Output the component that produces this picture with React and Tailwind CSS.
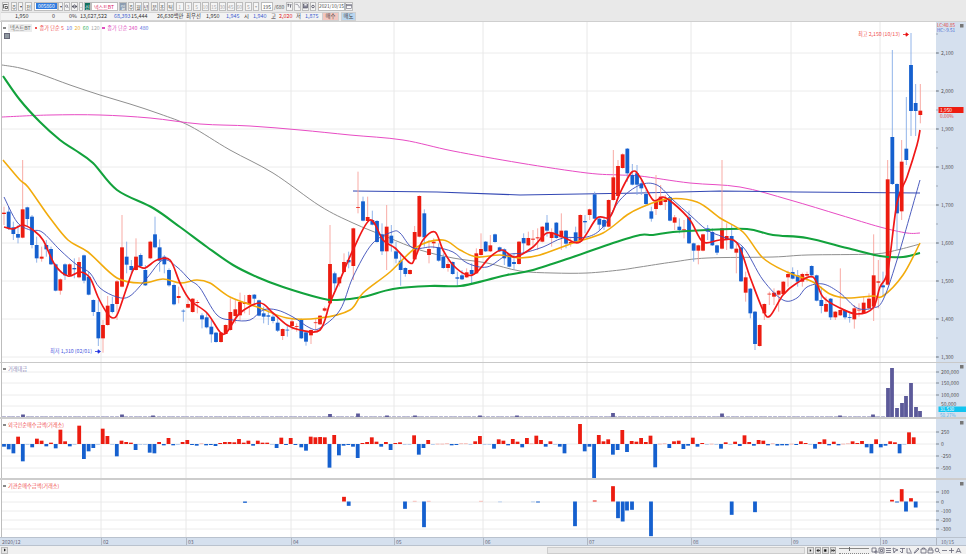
import React from "react";

const F = '"Noto Sans CJK KR","Liberation Sans",sans-serif';
const RED = "#ec1c10", BLUE = "#1560cf";

// [x, colour, top, bottom, wickTop, wickBottom], in crop units (3 units = 1 px)
const S1 = [[12,"r",188,192,170,225],[26,"b",185,235,170,240],[40,"b",232,252,215,270],[54,"b",252,263,225,280],[68,"r",178,263,30,265],[82,"b",172,207,170,230],[96,"b",200,285,195,295],[110,"b",285,325,260,338],[125,"r",320,326,290,335],[139,"b",285,298,270,320],[153,"b",297,343,290,345],[167,"b",343,422,340,424],[181,"r",388,422,385,434],[195,"b",343,376,340,390],[209,"r",343,376,340,378],[223,"b",354,358,325,385],[237,"r",336,382,322,385],[252,"b",316,392,314,400],[266,"b",380,434,365,436],[280,"b",450,486,448,498],[295,"b",486,565,450,588],[309,"r",525,565,510,608],[323,"r",467,525,438,527],[337,"b",462,486,440,490],[351,"r",394,462,390,510],[366,"r",292,410,195,412],[380,"b",320,344,275,370],[394,"b",348,360,330,372],[408,"r",320,360,265,362],[422,"b",315,348,310,352],[436,"b",360,406,345,408],[451,"r",275,325,272,328],[465,"b",253,292,200,295],[479,"b",292,332,268,365],[493,"b",320,343,315,370],[507,"b",360,406,355,410],[522,"b",405,463,400,466],[536,"r",438,444,410,460],[550,"b",482,484,478,515],[564,"r",462,473,445,475],[578,"r",446,486,444,488],[592,"r",456,459,450,490],[606,"b",496,508,490,535],[620,"b",502,532,488,535],[634,"b",530,553,510,578],[648,"b",548,576,546,578],[663,"r",548,576,546,578],[677,"r",525,552,523,554],[691,"r",486,540,445,542],[706,"r",478,498,450,520],[720,"r",456,496,428,510],[734,"r",456,462,435,490],[748,"r",435,463,433,495],[763,"b",434,446,432,460],[777,"b",451,497,449,499],[791,"b",490,500,470,520],[805,"b",496,500,475,525],[819,"b",500,513,490,520],[833,"b",518,542,500,546],[848,"r",537,558,535,570],[862,"b",539,541,525,560],[876,"r",514,528,505,540],[890,"r",528,530,520,545],[904,"b",508,565,506,567],[918,"b",547,575,545,587],[933,"r",540,556,538,582],[947,"r",517,519,505,540],[960,"r",497,523,495,525]];
const S2 = [[14,"r",505,512,500,515],[30,"r",372,490,255,492],[44,"b",400,430,395,450],[58,"r",412,430,410,440],[72,"r",366,396,340,398],[86,"b",360,367,335,385],[100,"r",265,378,263,420],[114,"r",201,203,95,220],[129,"b",184,242,170,244],[143,"r",231,243,170,245],[157,"b",240,254,212,256],[171,"b",243,306,240,308],[186,"b",283,334,250,345],[200,"r",260,334,195,390],[214,"b",287,310,255,335],[228,"b",334,356,305,370],[242,"b",362,390,340,437],[256,"b",384,402,382,410],[270,"r",390,402,388,404],[284,"r",276,358,258,360],[298,"r",168,290,166,292],[313,"b",220,292,208,320],[327,"r",327,345,300,370],[341,"r",305,310,295,325],[356,"b",322,362,310,365],[370,"b",350,384,340,386],[384,"r",372,384,360,395],[398,"b",366,402,364,404],[412,"b",412,416,395,437],[426,"b",406,418,390,420],[440,"r",397,412,385,414],[455,"b",390,402,370,430],[469,"r",340,400,325,402],[483,"r",327,345,280,347],[497,"b",305,334,303,336],[511,"r",316,334,285,336],[525,"b",283,306,281,308],[539,"b",322,334,320,336],[553,"b",328,355,325,375],[568,"b",345,380,343,382],[582,"b",366,372,340,388],[597,"r",305,372,303,374],[611,"b",294,310,280,340],[625,"r",294,316,275,318],[639,"r",296,299,270,320],[653,"r",292,295,265,330],[667,"r",260,305,258,307],[681,"b",248,272,225,290],[695,"r",278,294,265,320],[709,"b",248,294,246,296],[724,"r",272,292,220,330],[738,"b",272,311,270,325],[752,"r",306,311,295,320],[767,"b",277,305,260,308],[781,"r",225,305,223,307],[795,"b",243,247,225,280],[809,"r",208,225,206,240],[824,"b",163,236,155,238],[838,"b",236,254,234,270],[852,"b",240,260,230,270],[866,"r",180,260,178,262],[880,"r",112,180,30,182],[894,"r",78,168,60,170],[908,"r",43,84,40,86],[922,"b",26,100,24,125],[937,"b",105,134,72,136],[951,"b",100,134,75,165]];
const S3 = [[4,"b",130,145,115,165],[18,"b",162,192,150,195],[34,"b",214,236,200,245],[48,"r",186,207,105,225],[62,"r",170,195,135,197],[76,"r",176,186,165,210],[90,"b",172,242,170,244],[104,"r",232,248,225,270],[118,"b",260,270,235,280],[132,"r",268,271,240,295],[147,"b",232,310,212,312],[161,"b",310,332,308,365],[175,"r",316,332,314,373],[189,"r",283,332,281,334],[203,"b",265,275,255,300],[217,"b",276,316,265,318],[231,"b",316,338,314,345],[246,"r",265,326,60,328],[260,"r",288,300,250,330],[275,"b",288,326,255,328],[289,"r",326,338,310,400],[303,"b",322,424,320,426],[317,"r",412,458,395,485],[331,"b",446,520,444,535],[345,"b",515,612,513,630],[359,"r",555,618,553,620],[373,"r",492,520,490,540],[388,"r",461,463,455,495],[402,"r",458,470,445,495],[416,"r",452,464,450,515],[430,"r",425,462,423,464],[444,"r",402,412,392,440],[458,"b",396,416,382,418],[473,"b",406,425,390,440],[487,"r",402,425,398,440],[501,"r",402,407,395,425],[515,"b",378,406,376,408],[530,"b",406,482,404,484],[544,"b",480,498,440,520],[558,"r",492,515,470,517],[572,"b",476,532,474,540],[586,"r",515,532,513,540],[601,"r",510,526,385,528],[615,"b",510,532,508,538],[629,"b",531,533,520,548],[643,"r",505,538,495,566],[657,"r",509,511,490,530],[671,"r",488,520,470,522],[687,"r",476,505,460,507],[701,"r",406,500,283,543],[715,"r",424,428,360,505],[729,"b",436,442,395,470],[743,"r",118,434,60,436],[757,"b",-9,132,-270,135],[771,"b",132,220,130,330],[785,"r",65,214,0,240],[799,"b",26,60,-129,75],[813,"b",-225,-87,-321,-12],[827,"b",-111,-87,-168,-12],[841,"r",-88,-75,-168,-50]];
const CANDLES = [...S1.map(c => [c, 0, 150]), ...S2.map(c => [c, 320, 140]), ...S3.map(c => [c, 640, 140])];

const GRAY = [[2,65],[20,68],[40,74],[70,85],[100,95],[130,104],[160,114],[190,126],[230,150],[273,173],[320,206],[353,223],[387,237],[420,250],[453,258],[487,263],[520,271],[553,273],[587,273],[620,270],[640,267],[673,262],[707,258],[773,257],[807,255],[873,254],[897,250],[920,244]];
const MAG = [[2,117],[50,115],[100,115],[150,118],[200,124],[250,126],[300,130],[350,135],[403,140],[453,151],[520,163],[587,173],[620,175],[640,176],[690,183],[740,187],[790,200],[840,215],[880,227],[907,233],[920,233]];
const NAVYH = [[353,191],[437,192],[520,195],[640,193],[720,191],[797,192],[920,193]];
const GREEN = [[3,76],[20,100],[40,122],[60,140],[75,150],[93,163],[117,190],[153,208],[180,227],[207,247],[233,265],[257,277],[283,287],[320,298],[337,300],[363,297],[393,289],[430,286],[460,286],[487,280],[507,275],[533,270],[573,257],[613,243],[640,235],[653,235],[673,232],[707,230],[747,229],[773,235],[807,238],[847,248],[880,256],[903,257],[920,253]];
const ORANGE = [[3,160],[20,180],[28,187],[50,218],[68,240],[88,252],[117,278],[143,283],[163,279],[180,283],[197,280],[210,283],[230,297],[260,308],[287,318],[320,318],[350,310],[363,293],[390,272],[417,247],[443,240],[460,250],[477,257],[500,255],[520,258],[540,255],[573,243],[603,233],[627,215],[640,208],[667,199],[697,202],[720,218],[743,232],[763,258],[787,272],[813,282],[830,294],[847,298],[873,296],[883,296],[903,275],[920,243]];
const NAVY = [[4,197],[17,222],[30,230],[42,232],[60,250],[77,265],[90,273],[100,288],[117,297],[130,296],[147,278],[163,260],[177,267],[190,280],[200,288],[217,315],[233,320],[250,320],[263,310],[277,310],[293,317],[310,328],[320,328],[340,310],[353,277],[372,244],[392,232],[400,233],[413,248],[433,247],[453,252],[467,263],[487,267],[507,255],[523,253],[543,247],[563,238],[587,237],[603,227],[620,200],[640,185],[657,185],[673,200],[690,215],[707,230],[723,237],[743,247],[763,280],[783,300],[797,298],[807,287],[823,284],[840,293],[857,308],[873,308],[883,300],[897,260],[920,180]];
const REDL = [[4,227],[13,229],[23,225],[33,230],[43,240],[55,265],[68,276],[80,272],[90,278],[98,297],[107,313],[113,318],[118,313],[127,287],[135,267],[145,268],[157,260],[170,260],[180,283],[190,300],[207,313],[220,332],[227,332],[240,313],[260,303],[273,313],[287,325],[300,330],[320,330],[330,303],[340,280],[353,250],[370,220],[383,240],[395,248],[410,263],[415,258],[423,240],[435,232],[443,250],[453,265],[467,275],[477,272],[490,257],[502,250],[515,257],[533,247],[547,233],[563,237],[580,242],[597,218],[610,217],[620,193],[632,172],[640,177],[653,200],[663,197],[673,203],[690,220],[703,242],[720,240],[737,243],[750,277],[763,310],[770,316],[783,295],[797,283],[813,277],[823,297],[840,308],[857,314],[873,308],[880,287],[888,270],[897,203],[907,177],[917,145],[920,130]];

const F1 = [8,16,28,-22,52,2,10,-16,-10,7,-4,13,-43,-8,7,2,-55,45,22,12,2,-46,-24,1,37,-10,-6,-4,18,2,2,26,28,-6,4,-18,4,1,-6,-12,3,5,-2,4,3,6,-3,-6,-6,-5,-15,-4,-10,5,-10,-4,-4,2,12,-19,3,-18,3];
const F2 = [10,20,-22,-20,-21,-20,71,-27,34,5,3,8,42,-3,-6,-20,-7,8,-6,18,-3,-5,1,2,-26,32,12,-12,1,-1,-1,-2,4,3,-2,-2,1,-8,-24,2,2,14,-14,-10,4,-15,-7,10,-18,-2,-25,-12,8,-8,1,8,28];
const F3 = [-60,22,8,103,-27,-8,-14,32,18,-42,24,-9,-7,-18,-6,-25,70,-1,-2,12,-8,-10,15,5,-19,8,-3,2,-1,2,14,-5,2,-7,6,-26,-6,5,-12,-10,4,-2,5,4,4,-1,3,-8,-3,2,14,-6,-14,4,-7,4,-1,-2,-8,-3,-9,10,28,-14,10,5,-8,-5,28,2,-35,-20];
const FOREIGN = [...F1.map((v, i) => [4 + i * 4.7, v]), ...F2.map((v, i) => [301.3 + i * 4.7, v]), ...F3.map((v, i) => [580 + i * 4.7, v])];

const INST = [[245,4],[344,-14],[348.7,13],[405,22],[414.7,-2],[424,77],[428.7,-2],[481,-2],[500,1],[533,2],[538,3],[575,74],[594.7,-3],[613,-46],[618,50],[622.7,60],[627,27],[632,25],[651,104],[731.7,40],[755,32],[892,-5],[897,3],[901.7,-37],[906,30],[911,-10],[915.7,18]];
const VOLSPIKE = { 23:2.5, 122:2.5, 153:1.5, 330:3, 358:3.5, 387:1.5, 415:1.5, 480:1.5, 517:1.5, 613:4, 722:3.5, 840:1.5, 873:2.5 };
const VOLBIG = [[888,29],[892,49],[897,9],[902,14],[906,21],[911,34],[916,10],[920,6]];
const VX = [101,186,291,394,483,587,691,791,880];
const pts = a => a.map(p => p.join(",")).join(" ");

// Catmull-Rom through the points, so that the averages run as curves
function smooth(a) {
  let d = `M${a[0][0]} ${a[0][1]}`;
  for (let i = 0; i < a.length - 1; i++) {
    const p0 = a[i - 1] || a[i], p1 = a[i], p2 = a[i + 1], p3 = a[i + 2] || a[i + 1];
    const c1x = p1[0] + (p2[0] - p0[0]) / 6, c1y = p1[1] + (p2[1] - p0[1]) / 6;
    const c2x = p2[0] - (p3[0] - p1[0]) / 6, c2y = p2[1] - (p3[1] - p1[1]) / 6;
    d += `C${c1x.toFixed(1)} ${c1y.toFixed(1)} ${c2x.toFixed(1)} ${c2y.toFixed(1)} ${p2[0]} ${p2[1]}`;
  }
  return d;
}

function Plot({ top, h, grid, children }) {
  return (
    <svg className="block w-[936px] shrink-0" width="936" height={h} viewBox={`0 ${top} 936 ${h}`}>
      {grid.map(y => <line key={y} x1="2" x2="936" y1={y} y2={y} stroke="#ececec" />)}
      {VX.map(x => <line key={x} x1={x} x2={x} y1={top} y2={top + h} stroke="#e8e8e8" />)}
      <line x1="1.5" x2="1.5" y1={top} y2={top + h} stroke="#bdbdbd" />
      {children}
    </svg>
  );
}

function Axis({ top, h, items, minor = [], children }) {
  return (
    <svg className="block flex-1 bg-[#d5e0ee]" width="30" height={h} viewBox={`936 ${top} 30 ${h}`} fontFamily={F}>
      {minor.map(y => <line key={y} x1="936" x2="938" y1={y} y2={y} stroke="#9fa8b4" />)}
      {items.map(([y, t]) => (
        <g key={t}>
          <line x1="936" x2="939" y1={y} y2={y} stroke="#7f8894" />
          <text x="941" y={y + 2} fontSize="5" fill="#555">{t}</text>
        </g>
      ))}
      {children}
      <rect x="960" y={top + 2} width="3.5" height="3.5" fill="#777" />
    </svg>
  );
}

function Tool({ w, ml, cls = "", children }) {
  return <div className={`h-[9px] flex items-center justify-center border border-[#bdbdbd] bg-[#f5f5f5] text-[5px] leading-none overflow-hidden ${w} ${ml} ${cls}`}>{children}</div>;
}

function Val({ cls, children }) {
  return <span className={`absolute top-0 leading-[7px] text-[5.4px] whitespace-nowrap ${cls}`}>{children}</span>;
}

function Toolbar() {
  return (
    <div className="h-[22px] bg-[#e9e9e9] border-b border-[#cfcfcf] shrink-0" style={{ fontFamily: F }}>
      <div className="h-[12px] flex items-center pl-[2px] text-[#444]">
        <Tool w="w-[7px]"><svg width="5" height="5" viewBox="0 0 5 5"><path d="M0.5 4.5V.5H4.5M2 2.5h2.5v2H2z" fill="none" stroke="#333" strokeWidth=".7" /></svg></Tool>
        <Tool w="w-[6px]" ml="ml-[2px]">주</Tool>
        <Tool w="w-[5px]" ml="ml-px"><span className="text-[4px]">▾</span></Tool>
        <Tool w="w-[7px]" ml="ml-[2px]">전</Tool>
        <div className="h-[9px] w-[24px] ml-[2px] bg-white border border-[#bdbdbd] flex items-center pl-px">
          <span className="bg-[#2f7be0] text-white text-[5px] leading-[6px] px-[2px]">005860</span>
        </div>
        <Tool w="w-[5px]"><span className="text-[4px]">▾</span></Tool>
        <Tool w="w-[6px]" ml="ml-px"><svg width="5" height="5" viewBox="0 0 5 5"><circle cx="2" cy="2" r="1.4" fill="none" stroke="#556" strokeWidth=".7" /><path d="M3 3l1.6 1.6" stroke="#556" strokeWidth=".7" /></svg></Tool>
        <Tool w="w-[7px]" ml="ml-px"><svg width="5" height="5" viewBox="0 0 5 5"><path d="M2.5 0v5M0 2.5l1.5-1.2v2.4zM5 2.5L3.5 1.3v2.4z" fill="#334" stroke="#334" strokeWidth=".4" /></svg></Tool>
        <Tool w="w-[4px]" ml="ml-px">-</Tool>
        <Tool w="w-[7px]" ml="ml-px" cls="!bg-[#12705f] text-white">신</Tool>
        <div className="h-[9px] w-[27px] bg-white border border-[#bdbdbd] flex items-center pl-[2px] text-[5px] text-[#d81b60] leading-none whitespace-nowrap">넥스트BT</div>
        <Tool w="w-[8px]" ml="ml-px" cls="!bg-[#8c9cb0] text-white">일</Tool>
        <Tool w="w-[6px]" ml="ml-px">주</Tool>
        <Tool w="w-[7px]" ml="ml-px">월</Tool>
        <Tool w="w-[6px]" ml="ml-px">년</Tool>
        <Tool w="w-[7px]" ml="ml-[2px]">분</Tool>
        <Tool w="w-[6px]" ml="ml-px">초</Tool>
        <Tool w="w-[7px]" ml="ml-[2px]">틱</Tool>
        {["1", "3", "5", "10", "15", "30", "45", "60"].map((t, i) => (
          <Tool key={t} w="w-[7.5px]" ml={i ? "ml-[1px]" : "ml-[2px]"} cls="text-[#aaa]">{t}</Tool>
        ))}
        <Tool w="w-[7px]" ml="ml-[2px]" cls="text-[#999]">5</Tool>
        <Tool w="w-[6px]" ml="ml-[1px]" cls="text-[#aaa]"><span className="text-[4px]">▾</span></Tool>
        <div className="h-[9px] w-[12px] ml-[2px] bg-white border border-[#bdbdbd] flex items-center justify-end pr-px text-[5px] leading-none">195</div>
        <span className="text-[5px] leading-none w-[13px] pl-px text-[#555]">/680</span>
        <Tool w="w-[7px]"><svg width="6" height="6" viewBox="0 0 6 6"><path d="M.5 1h2M1.5 1v3M3 1.5h2.5M4.2 2v3" stroke="#334" strokeWidth=".8" /></svg></Tool>
        <Tool w="w-[7px]" ml="ml-px"><svg width="6" height="6" viewBox="0 0 6 6"><path d="M.5 1h2.5l2 3v1.5" fill="none" stroke="#667" strokeWidth=".7" /></svg></Tool>
        <Tool w="w-[7px]" ml="ml-px"><svg width="6" height="6" viewBox="0 0 6 6"><rect x=".6" y=".6" width="4.8" height="4.8" fill="#889" stroke="#334" strokeWidth=".6" /><rect x="1.6" y=".6" width="2.8" height="1.8" fill="#eee" /></svg></Tool>
        <Tool w="w-[6px]" ml="ml-px"><svg width="5" height="5" viewBox="0 0 5 5"><circle cx="2.5" cy="2.5" r="1.6" fill="none" stroke="#445" strokeWidth="1" /></svg></Tool>
        <div className="h-[9px] w-[27px] ml-[2px] bg-white border border-[#bdbdbd] flex items-center justify-center text-[4.8px] leading-none whitespace-nowrap">2021/10/15</div>
        <Tool w="w-[8px]"><svg width="6" height="5" viewBox="0 0 6 5"><rect x=".4" y=".4" width="5.2" height="4.2" fill="#fff" stroke="#667" strokeWidth=".6" /><path d="M.4 1.6h5.2" stroke="#667" strokeWidth=".8" /></svg></Tool>
      </div>
      <div className="h-[9px] flex">
        <div className="relative h-[9px] w-[321px] ml-px bg-[#f3f3f3] border-y border-[#d4d4d4] text-[#333]">
          <Val cls="left-[14px]">1,950</Val>
          <Val cls="left-[51px]">0</Val>
          <Val cls="left-[68px]">0%</Val>
          <Val cls="left-[79px]">13,627,522</Val>
          <Val cls="left-[113px] text-[#4060d0]">68,393</Val>
          <Val cls="left-[130px]">15,444</Val>
          <Val cls="left-[156px]">26,630백만</Val>
          <Val cls="left-[185px]">최우선</Val>
          <Val cls="left-[205px]">1,950</Val>
          <Val cls="left-[225px] text-[#4060d0]">1,945</Val>
          <Val cls="left-[243px]">시</Val>
          <Val cls="left-[252px] text-[#4060d0]">1,940</Val>
          <Val cls="left-[270px]">고</Val>
          <Val cls="left-[278px] text-[#e02020]">2,020</Val>
          <Val cls="left-[295px]">저</Val>
          <Val cls="left-[304px] text-[#4060d0]">1,875</Val>
        </div>
        <div className="h-[9px] w-[17px] bg-[#f2c6bf] border border-[#cfcfcf] flex items-center justify-center text-[5.4px] text-[#444] leading-none">매수</div>
        <div className="h-[9px] w-[15px] ml-[2px] bg-[#b9d6f0] border border-[#cfcfcf] flex items-center justify-center text-[5.4px] text-[#444] leading-none">매도</div>
      </div>
    </div>
  );
}

function PanelLabel({ cls, children }) {
  return (
    <div className={`absolute left-[3px] top-[2px] flex items-center gap-[2.5px] text-[5.2px] leading-[8px] whitespace-nowrap ${cls}`}>
      <span className="w-[2.5px] h-[2.5px] bg-[#888]" />{children}
    </div>
  );
}

function Main() {
  const grid = [53, 91, 129, 167, 205, 243, 281, 319, 357];
  const items = grid.map((y, i) => [y, ["2,100", "2,000", "1,900", "1,800", "1,700", "1,600", "1,500", "1,400", "1,300"][i]]);
  const minor = [];
  for (let y = 34; y < 362; y += 19) minor.push(y);
  return (
    <div className="flex h-[340px] shrink-0">
      <div className="relative">
        <Plot top={22} h={340} grid={grid}>
          <path d={smooth(GRAY)} fill="none" stroke="#8f8f8f" strokeWidth="1" />
          <path d={smooth(MAG)} fill="none" stroke="#e84cc4" strokeWidth="1" />
          <polyline points={pts(NAVYH)} fill="none" stroke="#3348b4" strokeWidth="1.1" />
          {CANDLES.map(([c, ox, oy], i) => {
            const x = ox + c[0] / 3, t = oy + c[2] / 3, b = oy + c[3] / 3, wt = oy + c[4] / 3, wb = oy + c[5] / 3;
            const col = c[1] === "r" ? RED : BLUE;
            return (
              <g key={i}>
                <line x1={x} x2={x} y1={wt} y2={wb} stroke={c[1] === "r" ? "#f7a19b" : "#86abe6"} strokeWidth="0.9" />
                <rect x={x - 1.9} y={t} width="3.8" height={Math.max(b - t, 0.8)} fill={col} />
              </g>
            );
          })}
          <path d={smooth(GREEN)} fill="none" stroke="#12a23c" strokeWidth="2.1" />
          <path d={smooth(ORANGE)} fill="none" stroke="#f2ab0c" strokeWidth="1.6" />
          <path d={smooth(NAVY)} fill="none" stroke="#3a4cb8" strokeWidth="0.9" />
          <path d={smooth(REDL)} fill="none" stroke="#f01818" strokeWidth="1.7" />
          <text x="858" y="36" fontSize="5.2" fontFamily={F} fill="#f05050">최고 2,150 (10/13)</text>
          <path d="M903 34.5h5M906 32.8l2.5 1.7-2.5 1.7z" stroke="#e81010" strokeWidth=".8" fill="#e81010" />
          <text x="50" y="353" fontSize="5.2" fontFamily={F} fill="#4a5ae0">최저 1,310 (02/01)</text>
          <path d="M95 351.5h5M98 349.8l2.5 1.7-2.5 1.7z" stroke="#2030e0" strokeWidth=".8" fill="#2030e0" />
        </Plot>
        <div className="absolute left-[3px] top-[2px]" style={{ fontFamily: F }}>
          <div className="flex items-center gap-[2.5px] text-[5.2px] leading-[8px] whitespace-nowrap text-[#f05050]">
            <span className="w-[2.5px] h-[2.5px] bg-[#888]" />
            <span className="bg-[#ececec] text-[#666] px-[2px] w-[24px]">넥스트BT</span>
            <span className="w-[2.5px] h-[2.5px] bg-[#f05050]" />
            <span>종가 단순 5</span>
            <span className="text-[#5a70e0]">10</span>
            <span className="text-[#eeb030]">20</span>
            <span className="text-[#30b060]">60</span>
            <span className="text-[#aaa]">120</span>
            <span className="w-[2.5px] h-[2.5px] bg-[#e050c0]" />
            <span className="text-[#e050c0]">종가 단순 240</span>
            <span className="text-[#5a70e0]">480</span>
          </div>
          <div className="w-[6px] h-[6px] ml-[1px] mt-[0.5px] bg-[#8f98a0] border border-[#667]" />
        </div>
      </div>
      <Axis top={22} h={340} items={items} minor={minor}>
        <text x="937" y="26.5" fontSize="4.6" fill="#e04040">LC:40.85</text>
        <text x="937" y="31.5" fontSize="4.6" fill="#4060d0">HC:-9.51</text>
        <rect x="938.5" y="107" width="25" height="6" fill="#ee1c10" />
        <text x="940" y="112" fontSize="4.8" fill="#fff">1,950</text>
        <text x="940" y="118" fontSize="4.8" fill="#e04040">0.00%</text>
      </Axis>
    </div>
  );
}

function Volume() {
  const grid = [372, 383, 395, 406];
  const bars = [];
  for (let i = 0; i < 188; i++) {
    const x = Math.round(4 + i * 4.7);
    bars.push(<rect key={i} x={x - 1.9} y={416.2} width="3.8" height="0.9" fill="#a6a6c8" />);
  }
  return (
    <div className="flex h-[54px] shrink-0">
      <div className="relative">
        <Plot top={363} h={54} grid={grid}>
          {bars}
          {Object.entries(VOLSPIKE).map(([x, v]) => <rect key={x} x={+x - 1.9} y={417 - v} width="3.8" height={v} fill="#5c5a9a" />)}
          {VOLBIG.map(([x, v]) => <rect key={x} x={x - 1.9} y={417 - v} width="3.8" height={v} fill="#5c5a9a" />)}
        </Plot>
        <PanelLabel cls="text-[#8a8ab8]"><span style={{ fontFamily: F }}>거래대금</span></PanelLabel>
      </div>
      <Axis top={363} h={54} items={[[372, "200,000"], [383, "150,000"], [395, "100,000"]]}>
        <text x="941" y="405.5" fontSize="5" fill="#555">50,000</text>
        <rect x="938.5" y="406.5" width="27.5" height="5.5" fill="#12c4f0" />
        <text x="940" y="411" fontSize="4.6" fill="#fff">31,530</text>
        <text x="940" y="416.5" fontSize="4.6" fill="#5ab4e8">50.27%</text>
      </Axis>
    </div>
  );
}

function barFill(v) {
  if (Math.abs(v) <= 2) return v > 0 ? "#a9c6ee" : "#f8b0aa";
  return v > 0 ? BLUE : RED;
}

function Foreign() {
  const zero = 444;
  return (
    <div className="flex h-[59px] shrink-0">
      <div className="relative">
        <Plot top={419} h={59} grid={[432, 444, 456, 468]}>
          {FOREIGN.map(([x, v], i) => (
            <rect key={i} x={x - 1.9} y={v < 0 ? zero + v / 3 : zero} width="3.8" height={Math.max(Math.abs(v) / 3, 0.8)} fill={barFill(v)} />
          ))}
        </Plot>
        <PanelLabel cls="text-[#f05050]"><span style={{ fontFamily: F }}>외국인순매수금액(거래소)</span></PanelLabel>
      </div>
      <Axis top={419} h={59} items={[[432, "250"], [444, "0"], [456, "-250"], [468, "-500"]]} />
    </div>
  );
}

function Institution() {
  const zero = 501.5;
  return (
    <div className="flex h-[57px] shrink-0">
      <div className="relative">
        <Plot top={480} h={57} grid={[492, 502, 511, 520, 529]}>
          {INST.map(([x, v], i) => (
            <rect key={i} x={x - 1.9} y={v < 0 ? zero + v / 3 : zero} width="3.8" height={Math.max(Math.abs(v) / 3, 0.8)} fill={barFill(v)} />
          ))}
        </Plot>
        <PanelLabel cls="text-[#f05050]"><span style={{ fontFamily: F }}>기관순매수금액(거래소)</span></PanelLabel>
      </div>
      <Axis top={480} h={57} items={[[492, "100"], [502, "0"], [511, "-100"], [520, "-200"], [529, "-300"]]} />
    </div>
  );
}

function DateAxis() {
  const labels = ["02", "03", "04", "05", "06", "07", "08", "09", "10"];
  return (
    <div className="relative h-[9px] shrink-0 bg-[#d5e0ee] border-y border-[#b9c2ce] text-[5px] leading-[7px] text-[#667]" style={{ fontFamily: F }}>
      <span className="absolute left-[2px] top-0">2020/12</span>
      {labels.map((t, i) => (
        <span key={t} className="absolute top-0 h-full pl-px border-l border-[#b0b8c4]" style={{ left: VX[i] }}>{t}</span>
      ))}
      <span className="absolute left-[936px] top-0 h-full pl-[4px] border-l border-[#b0b8c4]">10/15</span>
    </div>
  );
}

function BottomBar() {
  const I = ({ d }) => (
    <svg width="7" height="7" viewBox="0 0 7 7" className="shrink-0"><path d={d} fill="none" stroke="#667" strokeWidth=".8" /></svg>
  );
  const icons = ["M1 1h4v4H1zM4 4h2v2H4z", "M1 1h5v5H1zM2.5 2.5h2v2h-2z", "M1 3.5h5M1 1.5h5M1 5.5h5", "M1 1l5 2-3 1-1 2z", "M1 1.5h5M3.5 1.5v4.5M1 4l2 2", "M1 1v5h5M3 1l2 4", "M1 6l4-5 1 1-4 4z", "M1 2h5v4H1zM2.5 2V1h2v1", "M1 3h5v3H1zM2 3V1h3v2", "M3 3m-1.8 0a1.8 1.8 0 1 0 3.6 0a1.8 1.8 0 1 0-3.6 0M4.4 4.4L6.2 6.2", "M1 3.5h5", "M1 3.5h5M3.5 1v5", "M1 6l2.5-5L6 6M2 4.5h3"];
  const nav = ["M3 2l2 1.5L3 5z", "M1 3.5l2-1.5v3zM6 3.5L4 2v3z", "M2 2h3v3H2z", "M1 2l2 1.5L1 5zM4 2l2 1.5L4 5z"];
  return (
    <div className="flex items-center h-[8px] bg-[#f1f1f1] overflow-hidden">
      <div className="w-[7px] h-[7px] ml-px bg-[#e4e4e4] border border-[#bbb] flex items-center justify-center">
        <svg width="4" height="4" viewBox="0 0 4 4"><path d="M1 .5l2 1.5-2 1.5z" fill="#222" /></svg>
      </div>
      <div className="w-[539px]" />
      <div className="w-[258px] h-[7px] bg-[#e7e7e7] border border-[#cdcdcd]" />
      <div className="flex gap-px ml-[2px]">
        {nav.map((d, i) => (
          <div key={i} className="w-[6.5px] h-[7px] bg-[#e0e0e0] border border-[#aaa] flex items-center justify-center">
            <svg width="5" height="5" viewBox="0 0 7 7"><path d={d} fill="#111" stroke="#111" strokeWidth=".6" /></svg>
          </div>
        ))}
      </div>
      <div className="relative w-[30px] h-[7px] ml-[3px] shrink-0">
        <div className="absolute top-[1.5px] left-0 right-0 h-px bg-[#888]" />
        <div className="absolute top-0 left-[10px] w-px h-[4px] bg-[#666]" />
        <div className="absolute bottom-0 left-0 right-0 h-px border-b border-dotted border-[#888]" />
      </div>
      <div className="flex ml-[2px]">{icons.map((d, i) => <I key={i} d={d} />)}</div>
    </div>
  );
}

export default function App() {
  return (
    <div className="w-[966px] h-[554px] bg-white overflow-hidden flex flex-col" style={{ fontFamily: F }}>
      <Toolbar />
      <Main />
      <div className="h-[1px] bg-[#c9c9c9] shrink-0" />
      <Volume />
      <div className="h-[2px] bg-[#cdcdcd] shrink-0" />
      <Foreign />
      <div className="h-[2px] bg-[#cdcdcd] shrink-0" />
      <Institution />
      <DateAxis />
      <BottomBar />
    </div>
  );
}
